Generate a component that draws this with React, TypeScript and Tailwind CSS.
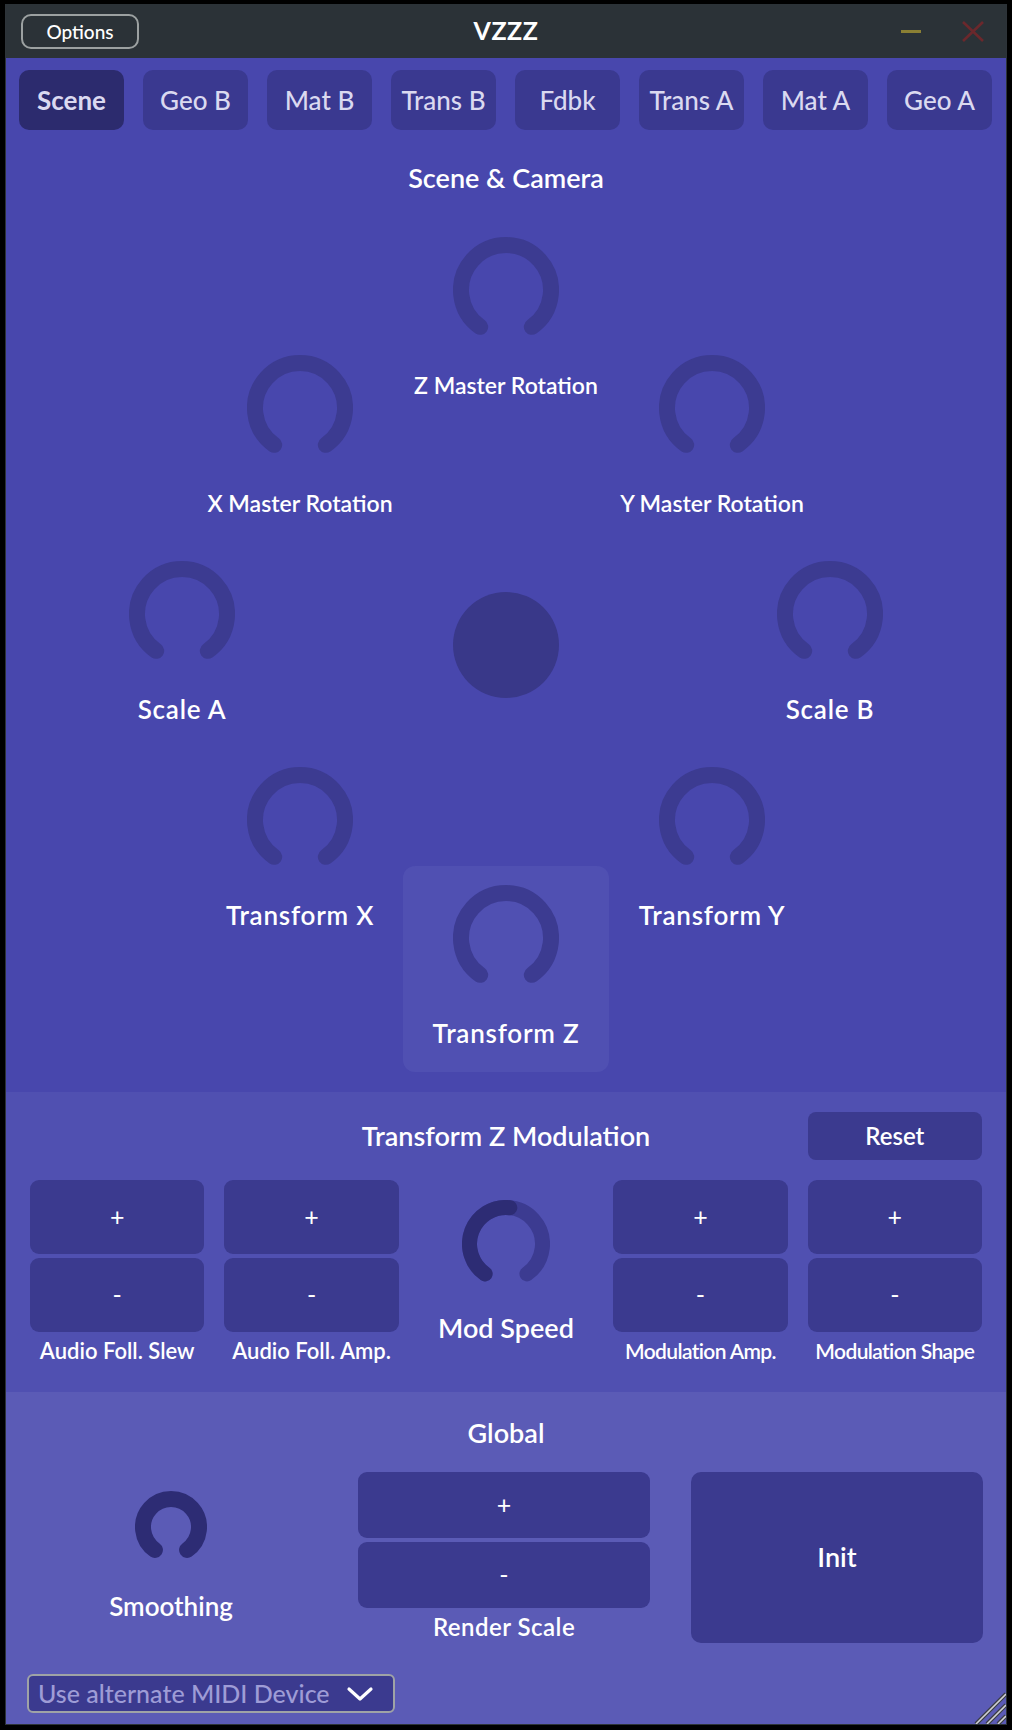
import React from "react";

const arc = (c: number, r: number, a0: number, a1: number) => {
  const pt = (a: number) => {
    const t = (a * Math.PI) / 180;
    return [c + r * Math.sin(t), c - r * Math.cos(t)];
  };
  const [x0, y0] = pt(a0);
  const [x1, y1] = pt(a1);
  const large = a1 - a0 > 180 ? 1 : 0;
  return `M ${x0} ${y0} A ${r} ${r} 0 ${large} 1 ${x1} ${y1}`;
};

type KnobProps = {
  size: number;
  stroke: number;
  track?: string;
  fill?: string;
  value?: number; // end angle of value arc, degrees from top
};

const Knob = ({ size, stroke, track = "#3c3b91", fill = "#2d2c74", value }: KnobProps) => {
  const c = size / 2;
  const r = c - stroke / 2;
  return (
    <svg width={size} height={size} viewBox={`0 0 ${size} ${size}`} className="block">
      <path d={arc(c, r, -145, 145)} fill="none" stroke={track} strokeWidth={stroke} strokeLinecap="round" />
      {value !== undefined && (
        <path d={arc(c, r, -145, value)} fill="none" stroke={fill} strokeWidth={stroke} strokeLinecap="round" />
      )}
    </svg>
  );
};

const BigKnob = ({ label, wide = false, className = "" }: { label: string; wide?: boolean; className?: string }) => (
  <div className={`flex flex-col items-center pt-[19px] ${className}`}>
    <Knob size={106} stroke={16} />
    <div
      className={`mt-[27px] leading-[30px] font-semibold text-white whitespace-nowrap ${
        wide ? "text-[26px] tracking-[0.03em]" : "text-[23px]"
      }`}
    >
      {label}
    </div>
  </div>
);

const tabs = ["Scene", "Geo B", "Mat B", "Trans B", "Fdbk", "Trans A", "Mat A", "Geo A"];

const PlusMinus = ({ label, tall = false, tight = false }: { label: string; tall?: boolean; tight?: boolean }) => (
  <div className="flex flex-col items-stretch">
    <button className={`${tall ? "h-[66px]" : "h-[74px]"} rounded-[9px] bg-[#3b3a8f] text-white text-[25px]`}>+</button>
    <button className={`${tall ? "h-[66px]" : "h-[74px]"} mt-[4px] rounded-[9px] bg-[#3b3a8f] text-white text-[25px]`}>-</button>
    <div
      className={`mt-[6px] text-center text-white font-semibold whitespace-nowrap leading-[26px] ${
        tall ? "text-[24px] tracking-[0.02em]" : tight ? "text-[21px] tracking-[-0.03em]" : "text-[22px]"
      }`}
    >
      {label}
    </div>
  </div>
);

export default function App() {
  return (
    <div className="w-[1012px] h-[1730px] bg-black pt-[4px] pl-[5px] font-[Lato,sans-serif]">
      <div className="relative w-[1002px] border border-t-0 border-[#2d3338]">
        {/* Title bar */}
        <div className="h-[54px] bg-[#2b3237] grid grid-cols-[1fr_auto_1fr] items-center">
          <div className="pl-[15px]">
            <button className="w-[118px] h-[35px] rounded-[10px] border-2 border-[#9ca1a1] text-white text-[19px] font-medium leading-none">
              Options
            </button>
          </div>
          <div className="text-white font-bold text-[25px] tracking-[0.02em]">VZZZ</div>
          <div className="flex items-center justify-end pr-[22px] gap-[41px]">
            <div className="w-[20px] h-[3px] bg-[#8b8034]" />
            <svg width="22" height="21" viewBox="0 0 22 21">
              <path d="M1 1 L21 20 M21 1 L1 20" stroke="#6b282c" strokeWidth="2.6" />
            </svg>
          </div>
        </div>

        {/* Scene & Camera */}
        <div className="bg-[#4847ad] pt-[12px] pb-[20px]">
          <div className="flex justify-between pl-[13px] pr-[14px]">
            {tabs.map((t, i) => (
              <button
                key={t}
                className={`w-[105px] h-[60px] rounded-[10px] text-[26px] text-[#dad9f0] whitespace-nowrap ${
                  i === 0 ? "bg-[#2c2b6e] font-bold" : "bg-[#3a3990] font-medium"
                }`}
              >
                {t}
              </button>
            ))}
          </div>
          <div className="mt-[33px] text-center text-white text-[27px] leading-[30px] font-semibold">Scene &amp; Camera</div>
          <div className="mt-[25px] mx-auto w-[854px] grid grid-cols-[118px_88px_118px_206px_118px_88px_118px] grid-rows-[118px_88px_118px_206px_118px_88px_118px]">
            <BigKnob label="Z Master Rotation" className="col-start-4 row-start-1 row-span-2" />
            <BigKnob label="X Master Rotation" className="col-start-2 col-span-2 row-start-2 row-span-2" />
            <BigKnob label="Y Master Rotation" className="col-start-5 col-span-2 row-start-2 row-span-2" />
            <BigKnob label="Scale A" wide className="col-start-1 col-span-2 row-start-4" />
            <div className="col-start-4 row-start-4 flex items-center justify-center">
              <div className="w-[106px] h-[106px] rounded-full bg-[#393889]" />
            </div>
            <BigKnob label="Scale B" wide className="col-start-6 col-span-2 row-start-4" />
            <BigKnob label="Transform X" wide className="col-start-2 col-span-2 row-start-5 row-span-2" />
            <BigKnob label="Transform Y" wide className="col-start-5 col-span-2 row-start-5 row-span-2" />
            <BigKnob label="Transform Z" wide className="col-start-4 row-start-6 row-span-2 rounded-[12px] bg-[#5050b2]" />
          </div>
        </div>

        {/* Modulation */}
        <div className="bg-[#5050b1] px-[24px] pt-[20px] pb-[28px]">
          <div className="grid grid-cols-5 gap-x-[20px] items-center">
            <div className="col-start-2 col-span-3 text-center text-white text-[27px] leading-[30px] font-semibold">
              Transform Z Modulation
            </div>
            <button className="col-start-5 h-[48px] rounded-[8px] bg-[#3b3a8f] text-white text-[24px] font-semibold">Reset</button>
          </div>
          <div className="mt-[20px] grid grid-cols-5 gap-x-[20px]">
            <PlusMinus label="Audio Foll. Slew" />
            <PlusMinus label="Audio Foll. Amp." />
            <div className="flex flex-col items-center pt-[20px]">
              <Knob size={88} stroke={15} track="#3c3b91" fill="#2d2c74" value={6} />
              <div className="mt-[24px] text-white text-[27px] leading-[32px] font-semibold whitespace-nowrap">Mod Speed</div>
            </div>
            <PlusMinus label="Modulation Amp." tight />
            <PlusMinus label="Modulation Shape" tight />
          </div>
        </div>

        {/* Global */}
        <div className="bg-[#5b5bb6] pt-[26px] pb-[11px]">
          <div className="text-center text-white text-[27px] leading-[30px] font-semibold">Global</div>
          <div className="mt-[24px] pl-[19px] pr-[23px] grid grid-cols-3 gap-x-[41px]">
            <div className="flex flex-col items-center pt-[19px]">
              <Knob size={72} stroke={16} track="#2d2c74" />
              <div className="mt-[27px] text-white text-[26px] leading-[32px] font-semibold">Smoothing</div>
            </div>
            <PlusMinus label="Render Scale" tall />
            <button className="h-[171px] rounded-[10px] bg-[#3b3a8f] text-white text-[27px] font-semibold">Init</button>
          </div>
          <div className="mt-[31px] ml-[21px] w-[368px] h-[39px] rounded-[6px] border-2 border-[#9fa3a6] bg-[#3b3a8f] flex items-center pl-[9px]">
            <span className="text-[25px] leading-none font-medium text-[#9e9cd6] whitespace-nowrap">Use alternate MIDI Device</span>
            <svg width="28" height="16" viewBox="0 0 28 16" className="ml-[16px]">
              <path d="M3 3 L14 13 L25 3" fill="none" stroke="#ffffff" strokeWidth="3.2" strokeLinecap="round" strokeLinejoin="round" />
            </svg>
          </div>
        </div>

        {/* Resize grip */}
        <svg width="38" height="38" viewBox="0 0 38 38" className="absolute right-0 bottom-0">
          {[0, 11, 22].map((o) => (
            <g key={o}>
              <path d={`M${8 + o} 38 L38 ${8 + o}`} stroke="#3a3d44" strokeWidth="4" />
              <path d={`M${8 + o} 38 L38 ${8 + o}`} stroke="#d0d0d4" strokeWidth="1.6" />
            </g>
          ))}
        </svg>
      </div>
    </div>
  );
}
